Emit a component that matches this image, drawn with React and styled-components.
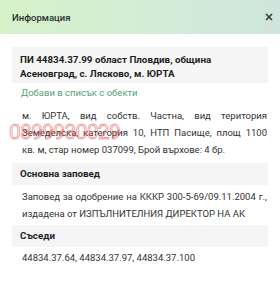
import React from "react";
import styled, { createGlobalStyle } from "styled-components";

const Global = createGlobalStyle`
  html, body { margin: 0; padding: 0; background: #ffffff; }
  body { font-family: Roboto, "Noto Sans", "Liberation Sans", sans-serif; color: #333; }
  * { box-sizing: border-box; }
`;

const Dialog = styled.div`
  position: relative;
  width: 280px;
  height: 281px;
  background: #fff;
  overflow: hidden;
`;

const Header = styled.div`
  height: 34px;
  padding: 0 7px 0 12px;
  display: flex;
  align-items: center;
  justify-content: space-between;
  background: linear-gradient(90deg, #d6f2c9 0%, #d3ecd6 55%, #cfe5dd 100%);
`;

const Title = styled.div`
  font-size: 9.5px;
  font-weight: 500;
  color: #2e2e2e;
`;

const Close = styled.button`
  border: 0;
  background: transparent;
  padding: 0;
  width: 8px;
  height: 8px;
  display: flex;
  align-items: center;
  justify-content: center;
`;

const Body = styled.div`
  padding: 13px 12px 0 12px;
  display: flex;
  flex-direction: column;
`;

const SectionHead = styled.div`
  background: #f5f5f5;
  padding: ${(p) => (p.$tall ? "6px 8px 2px 8px" : "5px 8px")};
  font-size: 9.8px;
  font-weight: 700;
  line-height: ${(p) => (p.$tall ? "14px" : "12px")};
  color: #1f1f1f;
  margin-top: ${(p) => p.$mt || 0}px;
`;

const Link = styled.div`
  margin-top: 1px;
  padding: 0 9px;
  font-size: 9.5px;
  line-height: 17px;
  color: #58a07a;
`;

const Text = styled.p`
  margin: ${(p) => p.$mt || 0}px 0 0 0;
  padding: 0 1px 0 10px;
  font-size: 9.5px;
  line-height: 17px;
  color: #333;
  text-align: justify;
`;

const Watermark = styled.div`
  position: absolute;
  left: 9px;
  top: 120px;
  font-family: Roboto, "Liberation Sans", sans-serif;
  font-size: 21px;
  font-weight: 400;
  letter-spacing: -0.7px;
  color: rgba(235, 130, 130, 0.14);
  -webkit-text-stroke: 0.8px rgba(225, 70, 70, 0.55);
  pointer-events: none;
`;

export default function App() {
  return (
    <>
      <Global />
      <Dialog>
        <Header>
          <Title>Информация</Title>
          <Close aria-label="close">
            <svg width="8" height="8" viewBox="0 0 8 8">
              <path d="M1 1 L7 7 M7 1 L1 7" stroke="#3d3d3d" strokeWidth="1.7" />
            </svg>
          </Close>
        </Header>
        <Body>
          <SectionHead $tall>
            ПИ 44834.37.99 област Пловдив, община Асеновград, с. Лясково, м. ЮРТА
          </SectionHead>
          <Link>Добави в списък с обекти</Link>
          <Text $mt={6}>
            м. ЮРТА, вид собств. Частна, вид територия Земеделска, категория 10, НТП Пасище, площ 1100 кв. м, стар номер 037099, Брой върхове: 4 бр.
          </Text>
          <SectionHead $mt={5}>Основна заповед</SectionHead>
          <Text $mt={3}>
            Заповед за одобрение на КККР 300-5-69/09.11.2004 г., издадена от ИЗПЪЛНИТЕЛНИЯ ДИРЕКТОР НА АК
          </Text>
          <SectionHead $mt={3}>Съседи</SectionHead>
          <Text $mt={2}>44834.37.64, 44834.37.97, 44834.37.100</Text>
        </Body>
        <Watermark>0899930029</Watermark>
      </Dialog>
    </>
  );
}
